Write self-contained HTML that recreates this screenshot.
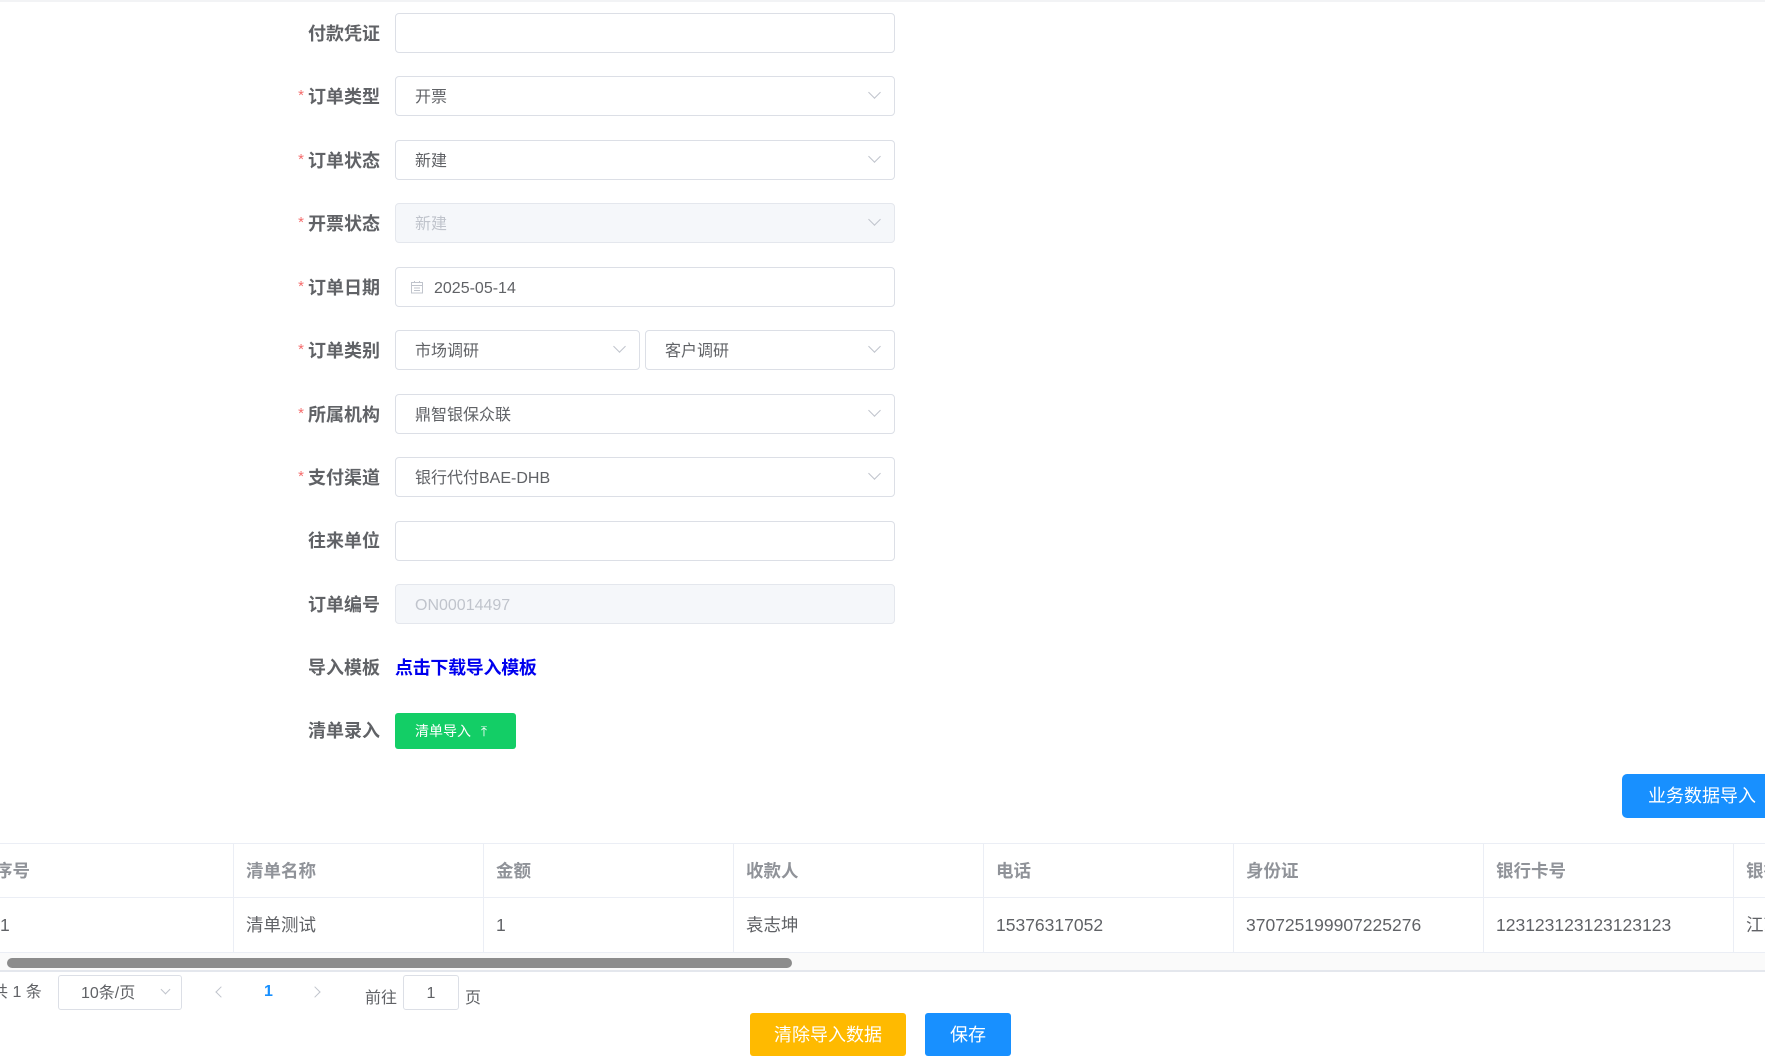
<!DOCTYPE html>
<html><head><meta charset="utf-8"><style>
*{box-sizing:border-box;margin:0;padding:0}
body{width:1765px;height:1063px;overflow:hidden;background:#fff;font-family:"Liberation Sans","Noto Sans CJK SC",sans-serif;position:relative;color:#606266}
.a{position:absolute}
.lbl{position:absolute;right:1385px;font-size:18px;font-weight:bold;color:#606266;white-space:nowrap;line-height:20px}
.lbl i{color:#f56c6c;font-style:normal;font-weight:normal;margin-right:4px;font-size:15px;position:relative;top:-3px}
.in{position:absolute;left:395px;width:500px;height:40px;border:1px solid #dcdfe6;border-radius:4px;background:#fff;font-size:16px;color:#606266;line-height:38px;padding-left:19px;padding-top:2px}
.dis{background:#f5f7fa;border-color:#e4e7ed;color:#c0c4cc}
.arr{position:absolute;right:15px;top:11px;width:9px;height:9px;border-right:1.3px solid #c0c4cc;border-bottom:1.3px solid #c0c4cc;transform:rotate(45deg)}
.th,.td{position:absolute;font-size:17.5px;padding-left:12px;white-space:nowrap}
.th{font-weight:bold;color:#909399;top:844px;height:55px;line-height:55px}
.td{color:#606266;top:898px;height:55px;line-height:55px}
.vl{position:absolute;width:1px;background:#ebeef5;top:843px;height:110px}
.chev{position:absolute;width:8px;height:8px;border-left:1.3px solid #c0c4cc;border-bottom:1.3px solid #c0c4cc}
</style></head><body>
<div class="a" style="left:0;top:0;width:1765px;height:2px;background:#f2f3f5"></div>

<div class="lbl" style="top:24px">付款凭证</div>
<div class="in" style="top:13px"></div>

<div class="lbl" style="top:87px"><i>*</i>订单类型</div>
<div class="in" style="top:76px">开票<span class="arr"></span></div>

<div class="lbl" style="top:151px"><i>*</i>订单状态</div>
<div class="in" style="top:140px">新建<span class="arr"></span></div>

<div class="lbl" style="top:214px"><i>*</i>开票状态</div>
<div class="in dis" style="top:203px">新建<span class="arr"></span></div>

<div class="lbl" style="top:278px"><i>*</i>订单日期</div>
<div class="in" style="top:267px;padding-left:38px">
<svg class="a" style="left:14px;top:12px" width="14" height="14" viewBox="0 0 14 14" fill="none" stroke="#c0c4cc" stroke-width="1"><rect x="1.5" y="2.5" width="11" height="10.5"/><line x1="1.5" y1="5.5" x2="12.5" y2="5.5"/><line x1="4.5" y1="1" x2="4.5" y2="3"/><line x1="9.5" y1="1" x2="9.5" y2="3"/><line x1="4" y1="8" x2="10" y2="8"/><line x1="4" y1="10.5" x2="10" y2="10.5"/></svg>
2025-05-14</div>

<div class="lbl" style="top:341px"><i>*</i>订单类别</div>
<div class="in" style="top:330px;width:245px">市场调研<span class="arr"></span></div>
<div class="in" style="top:330px;left:645px;width:250px">客户调研<span class="arr"></span></div>

<div class="lbl" style="top:405px"><i>*</i>所属机构</div>
<div class="in" style="top:394px">鼎智银保众联<span class="arr"></span></div>

<div class="lbl" style="top:468px"><i>*</i>支付渠道</div>
<div class="in" style="top:457px">银行代付BAE-DHB<span class="arr"></span></div>

<div class="lbl" style="top:531px">往来单位</div>
<div class="in" style="top:521px"></div>

<div class="lbl" style="top:595px">订单编号</div>
<div class="in dis" style="top:584px">ON00014497</div>

<div class="lbl" style="top:658px">导入模板</div>
<div class="a" style="left:395px;top:658px;font-size:18px;font-weight:bold;color:#0000ee;line-height:20px;letter-spacing:-0.3px">点击下载导入模板</div>

<div class="lbl" style="top:721px">清单录入</div>
<div class="a" style="left:395px;top:713px;width:121px;height:36px;background:#13ce66;border-radius:3px;color:#fff;font-size:14px;line-height:36px;padding-left:20px">清单导入 <span style="margin-left:6px">⤒</span></div>

<div class="a" style="left:1622px;top:774px;width:160px;height:44px;background:#1890ff;border-radius:5px;color:#fff;font-size:18px;line-height:44px;padding-left:26px">业务数据导入</div>

<div class="a" style="left:0;top:843px;width:1765px;height:1px;background:#ebeef5"></div>
<div class="a" style="left:0;top:897px;width:1765px;height:1px;background:#ebeef5"></div>
<div class="a" style="left:0;top:952px;width:1765px;height:1px;background:#ebeef5"></div>
<div class="a" style="left:0;top:953px;width:1765px;height:17px;background:#fafafa"></div>
<div class="a" style="left:7px;top:958px;width:785px;height:10px;background:#8c8c8c;border-radius:5px"></div>
<div class="a" style="left:0;top:970px;width:1765px;height:2px;background:#e4e7ed"></div>

<div class="vl" style="left:233px"></div><div class="vl" style="left:483px"></div><div class="vl" style="left:733px"></div><div class="vl" style="left:983px"></div><div class="vl" style="left:1233px"></div><div class="vl" style="left:1483px"></div><div class="vl" style="left:1733px"></div>

<div class="th" style="left:-17px">序号</div><div class="th" style="left:234px">清单名称</div><div class="th" style="left:484px">金额</div><div class="th" style="left:734px">收款人</div><div class="th" style="left:984px">电话</div><div class="th" style="left:1234px">身份证</div><div class="th" style="left:1484px">银行卡号</div><div class="th" style="left:1734px">银行</div>
<div class="td" style="left:-12px">1</div><div class="td" style="left:234px">清单测试</div><div class="td" style="left:484px">1</div><div class="td" style="left:734px">袁志坤</div><div class="td" style="left:984px">15376317052</div><div class="td" style="left:1234px">370725199907225276</div><div class="td" style="left:1484px">123123123123123123</div><div class="td" style="left:1734px">江苏</div>

<div class="a" style="left:-8px;top:983px;font-size:16px;line-height:20px">共 1 条</div>
<div class="a" style="left:58px;top:975px;width:124px;height:35px;border:1px solid #dcdfe6;border-radius:3px;font-size:16px;line-height:33px;padding-left:22px;padding-top:1px">10条/页<span class="arr" style="top:10px;right:12px;width:7px;height:7px"></span></div>
<span class="chev" style="left:217px;top:988px;transform:rotate(45deg)"></span>
<div class="a" style="left:264px;top:983px;font-size:16px;font-weight:bold;color:#1890ff">1</div>
<span class="chev" style="left:311px;top:988px;transform:rotate(-135deg)"></span>
<div class="a" style="left:365px;top:984px;font-size:16px">前往</div>
<div class="a" style="left:403px;top:975px;width:56px;height:35px;border:1px solid #dcdfe6;border-radius:3px;font-size:16px;line-height:33px;text-align:center;padding-top:1px">1</div>
<div class="a" style="left:465px;top:984px;font-size:16px">页</div>

<div class="a" style="left:750px;top:1013px;width:156px;height:43px;background:#ffba00;border-radius:3px;color:#fff;font-size:18px;line-height:43px;text-align:center;padding-top:1px">清除导入数据</div>
<div class="a" style="left:925px;top:1013px;width:86px;height:43px;background:#1890ff;border-radius:3px;color:#fff;font-size:18px;line-height:43px;text-align:center;padding-top:1px">保存</div>
</body></html>
